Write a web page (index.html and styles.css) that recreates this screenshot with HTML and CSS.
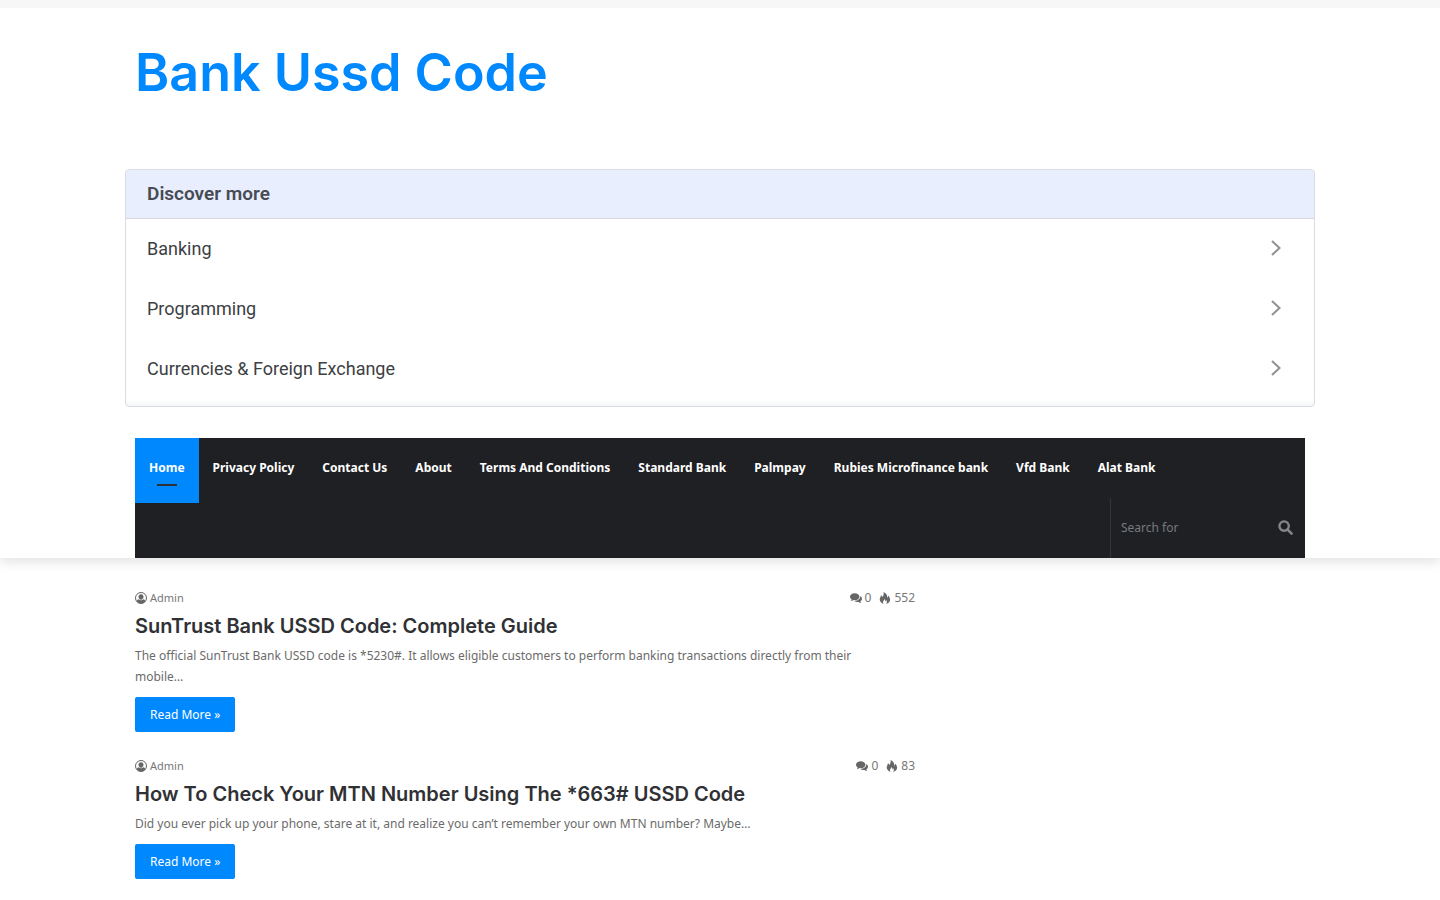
FILE: index.html
```html
<!DOCTYPE html>
<html lang="en">
<head>
  <meta charset="UTF-8" />
  <meta name="viewport" content="width=device-width, initial-scale=1" />
  <title>Bank Ussd Code</title>
  <link rel="stylesheet" href="styles.css">
</head>
<body>
  <!-- Shared icons -->
  <svg class="sprite" aria-hidden="true">
    <symbol id="icon-chevron" viewBox="0 0 12 18">
      <path d="M2 1l7.500 7-7.500 7" fill="none" stroke="currentColor" stroke-width="2" />
    </symbol>
    <symbol id="icon-user" viewBox="0 0 24 24">
      <circle cx="12" cy="12" r="11" fill="none" stroke="currentColor" stroke-width="2" />
      <path d="M12 4.500c-3.200 0-5 2.300-5 5.200 0 3.200 2.200 6 5 6s5-2.800 5-6c0-2.900-1.800-5.200-5-5.200z" fill="currentColor" />
      <path d="M7.500 14.500c-2.300.5-3.700 1.700-4.300 4C5.300 21.500 8.400 23 12 23s6.700-1.500 8.800-4.500c-.6-2.300-2-3.500-4.300-4-1.200 1.400-2.700 2.200-4.500 2.200s-3.300-.8-4.500-2.200z" fill="currentColor" />
    </symbol>
    <symbol id="icon-comments" viewBox="0 0 28 24">
      <path d="M22 9c0 4.400-4.900 8-11 8-1 0-1.900-.1-2.800-.3C6.500 18 4.300 18.800 2 19c1-1 1.700-2.100 2-3.600C1.600 13.900 0 11.600 0 9c0-4.400 4.900-8 11-8s11 3.600 11 8z" fill="currentColor" />
      <path d="M24 7.500c2.400 1.400 4 3.700 4 6.200 0 2.600-1.500 4.900-3.900 6.300.3 1.500 1 2.600 1.900 3.500-2.300-.2-4.300-1-6-2.200-4 .7-7.600-.2-10-2.300C17.800 19 24.500 14.500 24 7.500z" fill="currentColor" />
    </symbol>
    <symbol id="icon-fire" viewBox="1 0 22 24">
      <path d="M9.500 24C2.500 21.500 0 16.500 2.200 11.500c1.200-2.400 1.700-3.400 1.500-5.500 1.500 1 2.300 2.300 2.600 4C9 7.500 10 4 9 0c6 2.500 8 7 7.500 11.500 1.400-1 2-2.500 1.900-4.500C24.500 14 23.500 21.500 14 24c2.800-3 2-6-.5-8.500.2 1.700-.2 2.700-1.200 3.500 0-2.300-.5-4-1.800-5.500.2 3.500-3.500 5-2.500 8 .3 1 .7 1.800 1.500 2.500z" fill="currentColor" />
    </symbol>
    <symbol id="icon-search" viewBox="0 0 16 16">
      <circle cx="6.500" cy="6.500" r="5" fill="none" stroke="currentColor" stroke-width="2.500" />
      <path d="M10 10l4.500 4.500" stroke="currentColor" stroke-width="2.800" stroke-linecap="round" />
    </symbol>
  </svg>

  <header class="site-header">
    <div class="container logo">
      <a href="#">Bank Ussd Code</a>
    </div>

    <section class="discover">
      <h2>Discover more</h2>
      <ul>
        <li><a href="#">Banking <svg><use href="#icon-chevron" /></svg></a></li>
        <li><a href="#">Programming <svg><use href="#icon-chevron" /></svg></a></li>
        <li><a href="#">Currencies &amp; Foreign Exchange <svg><use href="#icon-chevron" /></svg></a></li>
      </ul>
    </section>

    <nav class="container main-nav">
      <ul class="menu">
        <li class="current"><a href="#">Home</a></li>
        <li><a href="#">Privacy Policy</a></li>
        <li><a href="#">Contact Us</a></li>
        <li><a href="#">About</a></li>
        <li><a href="#">Terms And Conditions</a></li>
        <li><a href="#">Standard Bank</a></li>
        <li><a href="#">Palmpay</a></li>
        <li><a href="#">Rubies Microfinance bank</a></li>
        <li><a href="#">Vfd Bank</a></li>
        <li><a href="#">Alat Bank</a></li>
      </ul>
      <form class="search">
        <input type="text" placeholder="Search for" aria-label="Search for" />
        <button type="submit" aria-label="Search"><svg><use href="#icon-search" /></svg></button>
      </form>
    </nav>
  </header>

  <main class="container">
    <div class="posts">
      <article class="post">
        <div class="post-meta">
          <a href="#"><svg><use href="#icon-user" /></svg>Admin</a>
          <span class="counts">
            <span><svg><use href="#icon-comments" /></svg>0</span>
            <span><svg><use href="#icon-fire" /></svg>552</span>
          </span>
        </div>
        <h2><a href="#">SunTrust Bank USSD Code: Complete Guide</a></h2>
        <p>The official SunTrust Bank USSD code is *5230#. It allows eligible customers to perform banking transactions directly from their mobile…</p>
        <a class="more" href="#">Read More »</a>
      </article>

      <article class="post">
        <div class="post-meta">
          <a href="#"><svg><use href="#icon-user" /></svg>Admin</a>
          <span class="counts">
            <span><svg><use href="#icon-comments" /></svg>0</span>
            <span><svg><use href="#icon-fire" /></svg>83</span>
          </span>
        </div>
        <h2><a href="#">How To Check Your MTN Number Using The *663# USSD Code</a></h2>
        <p>Did you ever pick up your phone, stare at it, and realize you can’t remember your own MTN number? Maybe…</p>
        <a class="more" href="#">Read More »</a>
      </article>
    </div>
  </main>
</body>
</html>
```
FILE: styles.css
```css
*, *::before, *::after {
  box-sizing: border-box;
}

body {
  margin: 0;
  background: #fff;
  color: #6b6b6b;
  font-family: "Noto Sans", sans-serif;
  font-size: 12px;
  line-height: 21px;
}

ul {
  margin: 0;
  padding: 0;
  list-style: none;
}

a {
  color: inherit;
  text-decoration: none;
}

.sprite {
  display: none;
}

.container {
  width: 100%;
  max-width: 1170px;
  margin: 0 auto;
}

/* Header */
.site-header {
  border-top: 8px solid #f7f7f7;
  background: #fff;
  box-shadow: 0 5px 10px rgba(0, 0, 0, 0.1);
}

.logo {
  padding: 34px 0 66px;
  color: #0088ff;
  font-family: Inter, sans-serif;
  font-size: 52px;
  font-weight: 600;
  line-height: 61px;
}

/* Related topics box */
.discover {
  max-width: 1190px;
  margin: 0 auto 31px;
  overflow: hidden;
  border: 1px solid #d9dce3;
  border-radius: 4px;
  box-shadow: inset 0 -6px 6px -4px #f1f3f4;
  color: #3c4043;
  font-family: Roboto, sans-serif;
  font-size: 18px;
}

.discover h2 {
  margin: 0;
  padding: 0 21px;
  border-bottom: 1px solid #d5d8e2;
  background: #e8eefd;
  color: #474b54;
  font-size: 19px;
  font-weight: 600;
  line-height: 48px;
}

.discover ul {
  padding-bottom: 7px;
}

.discover a {
  display: flex;
  align-items: center;
  justify-content: space-between;
  padding: 0 32px 0 21px;
  line-height: 60px;
}

.discover svg {
  width: 12px;
  height: 18px;
  color: #919191;
}

/* Main menu */
.main-nav {
  background: #1f2024;
}

.menu {
  display: flex;
  height: 60px;
}

.menu a {
  display: block;
  padding: 0 14px;
  color: #fff;
  font-weight: 700;
  line-height: 60px;
}

.menu .current {
  position: relative;
  height: 65px;
  background: #0088ff;
}

.menu .current::after {
  content: "";
  position: absolute;
  top: 46px;
  left: 50%;
  width: 20px;
  height: 2px;
  margin-left: -10px;
  background: #2c2f34;
}

.search {
  display: flex;
  align-items: center;
  width: 195px;
  height: 60px;
  margin-left: auto;
  padding: 0 12px 2px 0;
  border-left: 1px solid #34353a;
}

.search input {
  flex: 1;
  min-width: 0;
  padding: 0 10px;
  border: 0;
  background: none;
  color: #ccc;
  font: inherit;
}

.search input::placeholder {
  color: #777a7e;
}

.search button {
  padding: 0;
  border: 0;
  background: none;
  color: #85878a;
}

.search svg {
  display: block;
  width: 15px;
  height: 15px;
}

/* Post list */
.posts {
  max-width: 780px;
  padding-top: 30px;
}

.post {
  margin-bottom: 24px;
}

.post-meta {
  display: flex;
  justify-content: space-between;
  color: #777;
  font-size: 11px;
  line-height: 20px;
}

.post-meta a,
.counts,
.counts span {
  display: flex;
  align-items: center;
  gap: 3px;
}

.post-meta .counts {
  gap: 8px;
  font-size: 12px;
}

.post-meta svg {
  width: 12px;
  height: 12px;
  color: #666;
}

.post h2 {
  margin: 4px 0 5px;
  color: #2f3135;
  font-family: Inter, sans-serif;
  font-size: 20px;
  font-weight: 600;
  line-height: 28px;
}

.post p {
  margin: 0 0 10px;
  padding-right: 20px;
}

.more {
  display: inline-block;
  padding: 0 15px;
  border-radius: 2px;
  background: #0088ff;
  color: #fff;
  line-height: 35px;
  vertical-align: top;
}
```
